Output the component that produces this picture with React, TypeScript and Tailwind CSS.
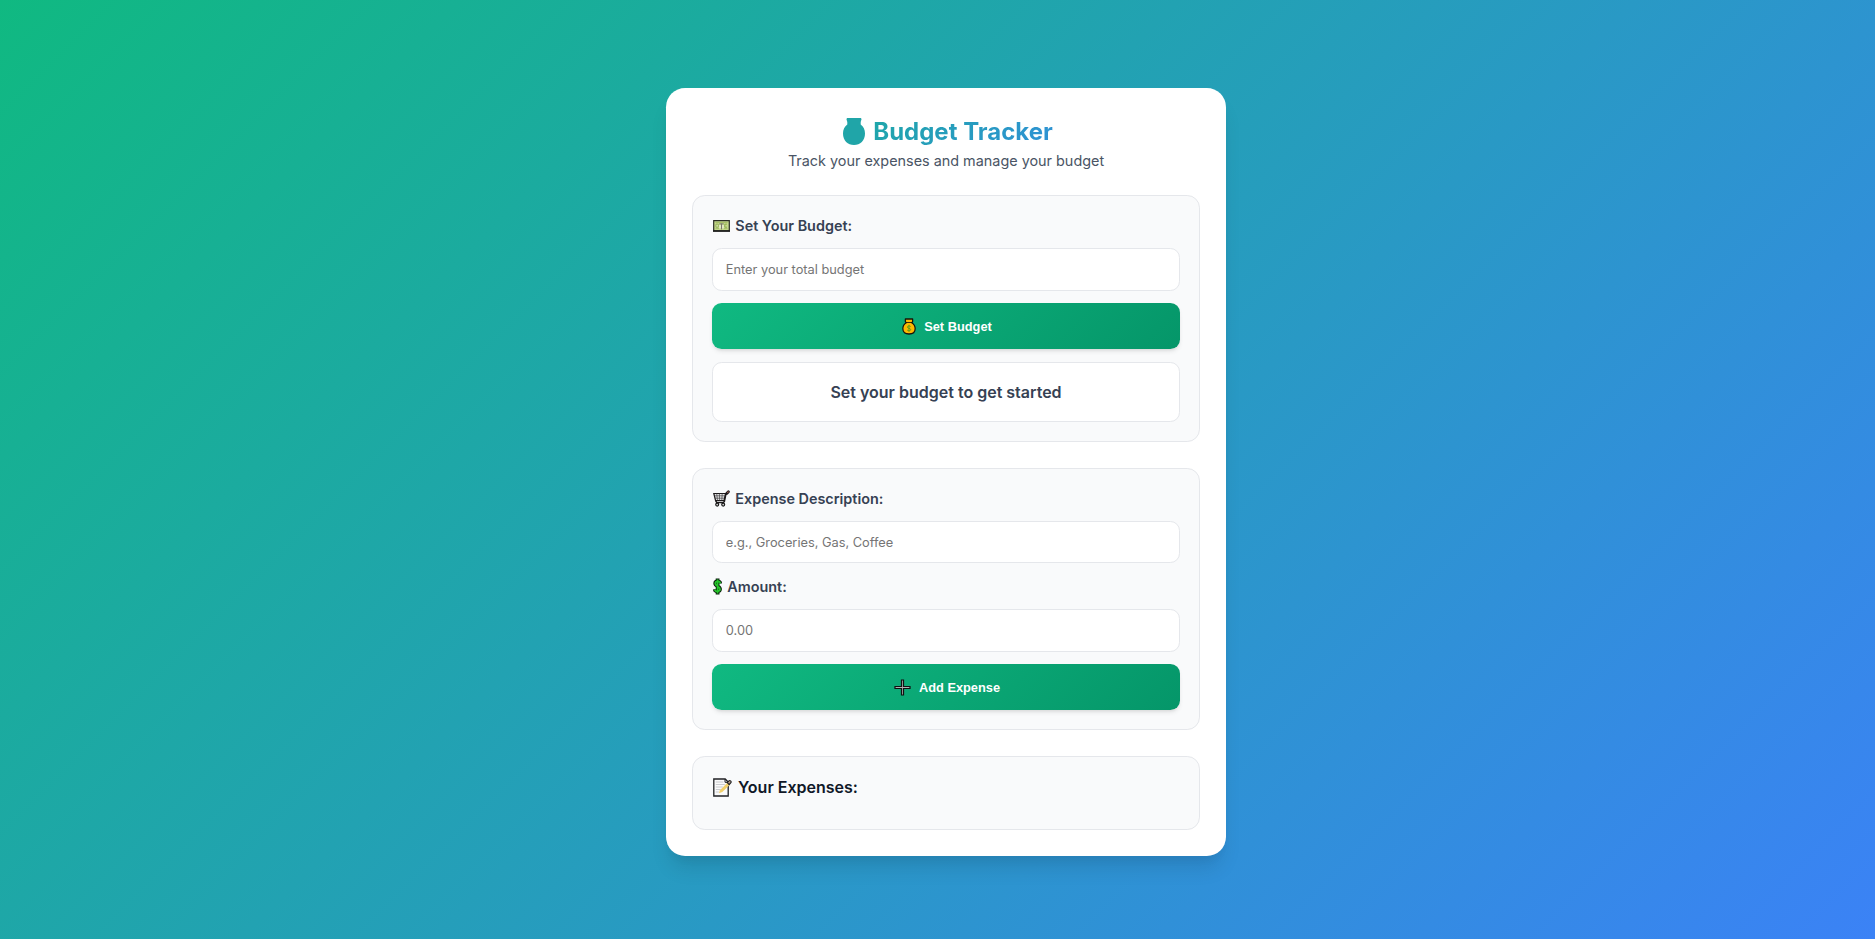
import React from "react";

function MoneyBag() {
  return (
    <svg className="h-[17px] w-[14px] shrink-0" viewBox="0 0 15 17" preserveAspectRatio="none">
      <path d="M3.600 1h7.800v2.600l-1 1.200c2.600 1.400 3.700 3.600 3.700 6 0 3.400-2.500 5.200-6.600 5.200S.9 14.200.9 10.800c0-2.400 1.100-4.600 3.700-6l-1-1.200z" fill="#fdb900" stroke="#17130a" strokeWidth="1.300" strokeLinejoin="round" />
      <path d="M4.200 4.500h6.600" stroke="#17130a" strokeWidth=".9" />
      <path d="M9.300 8.500c-.7-.8-3.500-.9-3.500.6 0 1.600 3.500.9 3.500 2.500 0 1.500-2.900 1.400-3.700.5M7.500 6.800v7" fill="none" stroke="#5f9a12" strokeWidth="1" />
    </svg>
  );
}

function BagSilhouette() {
  return (
    <svg className="mb-px h-[27px] w-[22px] shrink-0" viewBox="0 0 23 27" preserveAspectRatio="none">
      <path d="M5 0h13c1 0 1.500.7 1.300 1.600L18.500 4v2.600c2.900 2 4.500 5 4.500 8.900C23 22.500 18 27 11.500 27S0 22.500 0 15.500c0-3.900 1.600-6.900 4.500-8.900V4l-.8-2.400C3.500.7 4 0 5 0z" fill="#20a5a8" />
    </svg>
  );
}

function Banknote() {
  return (
    <svg className="h-[12px] w-[17px] shrink-0" viewBox="0 0 17 13" preserveAspectRatio="none">
      <path d="M.7.700h15.600v10.900H.7z" fill="#c5d88c" stroke="#2a2c24" strokeWidth="1.200" />
      <path d="M0 12h17" stroke="#111" strokeWidth="1.600" />
      <path d="M2.500 2.700h12M2.500 9.300h12" stroke="#a5be66" strokeWidth="1" />
      <path d="M3 4.500h2.200v3.300H3zM11.800 4.500H14M11.800 7.800H14M11.800 4.500v3.300" fill="#e6eec4" stroke="#81a13e" strokeWidth=".8" />
      <path d="M7 5.500v4M10 5.500v4" stroke="#f3f4e2" strokeWidth="1.200" />
      <path d="M6.300 4.200h4.400M8.500 4v6.200" stroke="#77746c" strokeWidth="1" />
    </svg>
  );
}

function Cart() {
  return (
    <svg className="h-[17px] w-[17px] shrink-0" viewBox="0 0 17 17" fill="none">
      <path d="M.8 3.500h11.700L11 10.600H2.600z" fill="#e4e4e4" stroke="#1d1a1b" strokeWidth="1.200" />
      <path d="M3.700 3.500l.8 7M6.400 3.500l.2 7M9.200 3.500l-.4 7M1.300 5.800h10.500M1.900 8.200h9.400" stroke="#39383a" strokeWidth=".65" />
      <path d="M15 2.600l-2.100 1.700-1.500 7.300-1.200 1H3.700l-1-2" stroke="#1d1a1b" strokeWidth="1.400" />
      <path d="M13.700 3.400l1.700-1.700" stroke="#1d1a1b" strokeWidth="2.800" strokeLinecap="round" />
      <path d="M14.600 2.500l.7-.7" stroke="#9a5a52" strokeWidth="1.100" strokeLinecap="round" />
      <circle cx="4.200" cy="14.600" r="1.500" fill="#ccc" stroke="#171717" strokeWidth="1.100" />
      <circle cx="10.200" cy="14.600" r="1.500" fill="#ccc" stroke="#171717" strokeWidth="1.100" />
    </svg>
  );
}

function Dollar() {
  return (
    <svg className="h-[17px] w-[9px] shrink-0" viewBox="0 0 9 17" fill="none">
      <path d="M7 5.600V4.500C6.200 3.100 2.400 2.900 2.200 5.300c-.1 3 4.900 2.900 4.800 6-.1 2.600-3.900 2.500-4.900 1.100v-1.200M4.600.5v16" stroke="#0b210c" strokeWidth="3.800" />
      <path d="M7 5.400V4.500C6.200 3.100 2.400 2.900 2.200 5.300c-.1 3 4.900 2.900 4.800 6-.1 2.600-3.900 2.500-4.900 1.100v-1M4.600 1.500v14" stroke="#25c52b" strokeWidth="1.800" />
    </svg>
  );
}

function Plus() {
  return (
    <svg className="h-[17px] w-[17px] shrink-0" viewBox="0 0 17 17">
      <path d="M7.500 1h2v6.500H16v2H9.500V16h-2V9.500H1v-2h6.500z" fill="#b0b0b2" stroke="#101010" strokeWidth="1.200" />
    </svg>
  );
}

function Memo() {
  return (
    <svg className="h-[19px] w-[19px] shrink-0" viewBox="0 0 19 19" fill="none">
      <path d="M.8 1h11.400l3 3v14H.8z" fill="#fafafa" stroke="#202124" strokeWidth="1.300" />
      <path d="M2.800 4h7.500M2.800 6.500h9M2.800 9h7M2.800 11.500h5M2.800 14h3" stroke="#c4c5c8" strokeWidth=".9" />
      <path d="M12 1v3.300h3" stroke="#202124" strokeWidth="1" />
      <path d="M5.800 15.200l1.200-3 7.300-7.400 2.200 2.100-7.200 7z" fill="#f3d06a" />
      <path d="M14.200 4.600l1.700-1.800c1-.9 2.900.7 2 1.900l-1.700 2z" fill="#b49a82" stroke="#202124" strokeWidth="1.100" />
    </svg>
  );
}

function Label({ icon, children }: { icon: React.ReactNode; children: string }) {
  return (
    <label className="mb-3 flex h-[21px] items-center gap-[5px] pl-[1.3px] text-[14.4px] font-semibold text-gray-700">
      {icon}
      <span>{children}</span>
    </label>
  );
}

function Field({ placeholder, size }: { placeholder: string; size: string }) {
  return (
    <input
      placeholder={placeholder}
      className={`block w-full rounded-[9.6px] border border-gray-200 bg-white px-[12.8px] text-[12.8px] outline-none placeholder:text-[#757575] ${size}`}
    />
  );
}

function ActionButton({ icon, children }: { icon: React.ReactNode; children: string }) {
  return (
    <button className="flex h-[46px] w-full items-center justify-center gap-2 rounded-[9.6px] bg-[linear-gradient(135deg,#10b981,#059669)] pt-px pl-[2px] font-['Liberation_Sans',sans-serif] text-[12.8px] font-bold text-white shadow-[0_3px_5px_-1px_rgba(0,0,0,0.1),0_2px_3px_-1px_rgba(0,0,0,0.06)]">
      {icon}
      <span>{children}</span>
    </button>
  );
}

const sectionClass = "rounded-[12.8px] border border-gray-200 bg-[#f9fafb] p-[19px]";

export default function App() {
  return (
    <div className="h-[939px] overflow-hidden bg-[linear-gradient(135deg,#10b981,#3b82f6)] pt-[88px] pl-[17px] font-['Inter',sans-serif]">
      <main className="mx-auto h-[768px] w-[560px] rounded-[19.2px] bg-white p-[26px] shadow-[0_16px_20px_-4px_rgba(0,0,0,0.1),0_8px_8px_-4px_rgba(0,0,0,0.04)]">
        <header className="mb-6 text-center">
          <h1 className="flex h-[36px] items-center justify-center gap-2 bg-[linear-gradient(135deg,#10b981,#3b82f6)] bg-clip-text pl-[4px] text-2xl font-bold text-transparent">
            <BagSilhouette />
            <span>Budget Tracker</span>
          </h1>
          <p className="h-[21px] text-[14.4px] leading-[21px] text-gray-600">Track your expenses and manage your budget</p>
        </header>

        <section className={`mb-[26px] ${sectionClass}`}>
          <Label icon={<Banknote />}>Set Your Budget:</Label>
          <Field placeholder="Enter your total budget" size="mb-3 h-[43px]" />
          <ActionButton icon={<MoneyBag />}>Set Budget</ActionButton>
          <div className="mt-[13px] flex h-[60px] items-center justify-center rounded-[9.6px] border border-gray-200 bg-white text-base font-semibold text-gray-700">
            Set your budget to get started
          </div>
        </section>

        <section className={`mb-[26px] ${sectionClass}`}>
          <Label icon={<Cart />}>Expense Description:</Label>
          <Field placeholder="e.g., Groceries, Gas, Coffee" size="mb-[13px] h-[42px] pt-px" />
          <Label icon={<Dollar />}>Amount:</Label>
          <Field placeholder="0.00" size="mb-3 h-[43px]" />
          <ActionButton icon={<Plus />}>Add Expense</ActionButton>
        </section>

        <section className={sectionClass}>
          <h3 className="mb-3 flex h-[22px] items-center gap-[6px] pl-px text-base font-semibold text-gray-900">
            <Memo />
            <span>Your Expenses:</span>
          </h3>
        </section>
      </main>
    </div>
  );
}
